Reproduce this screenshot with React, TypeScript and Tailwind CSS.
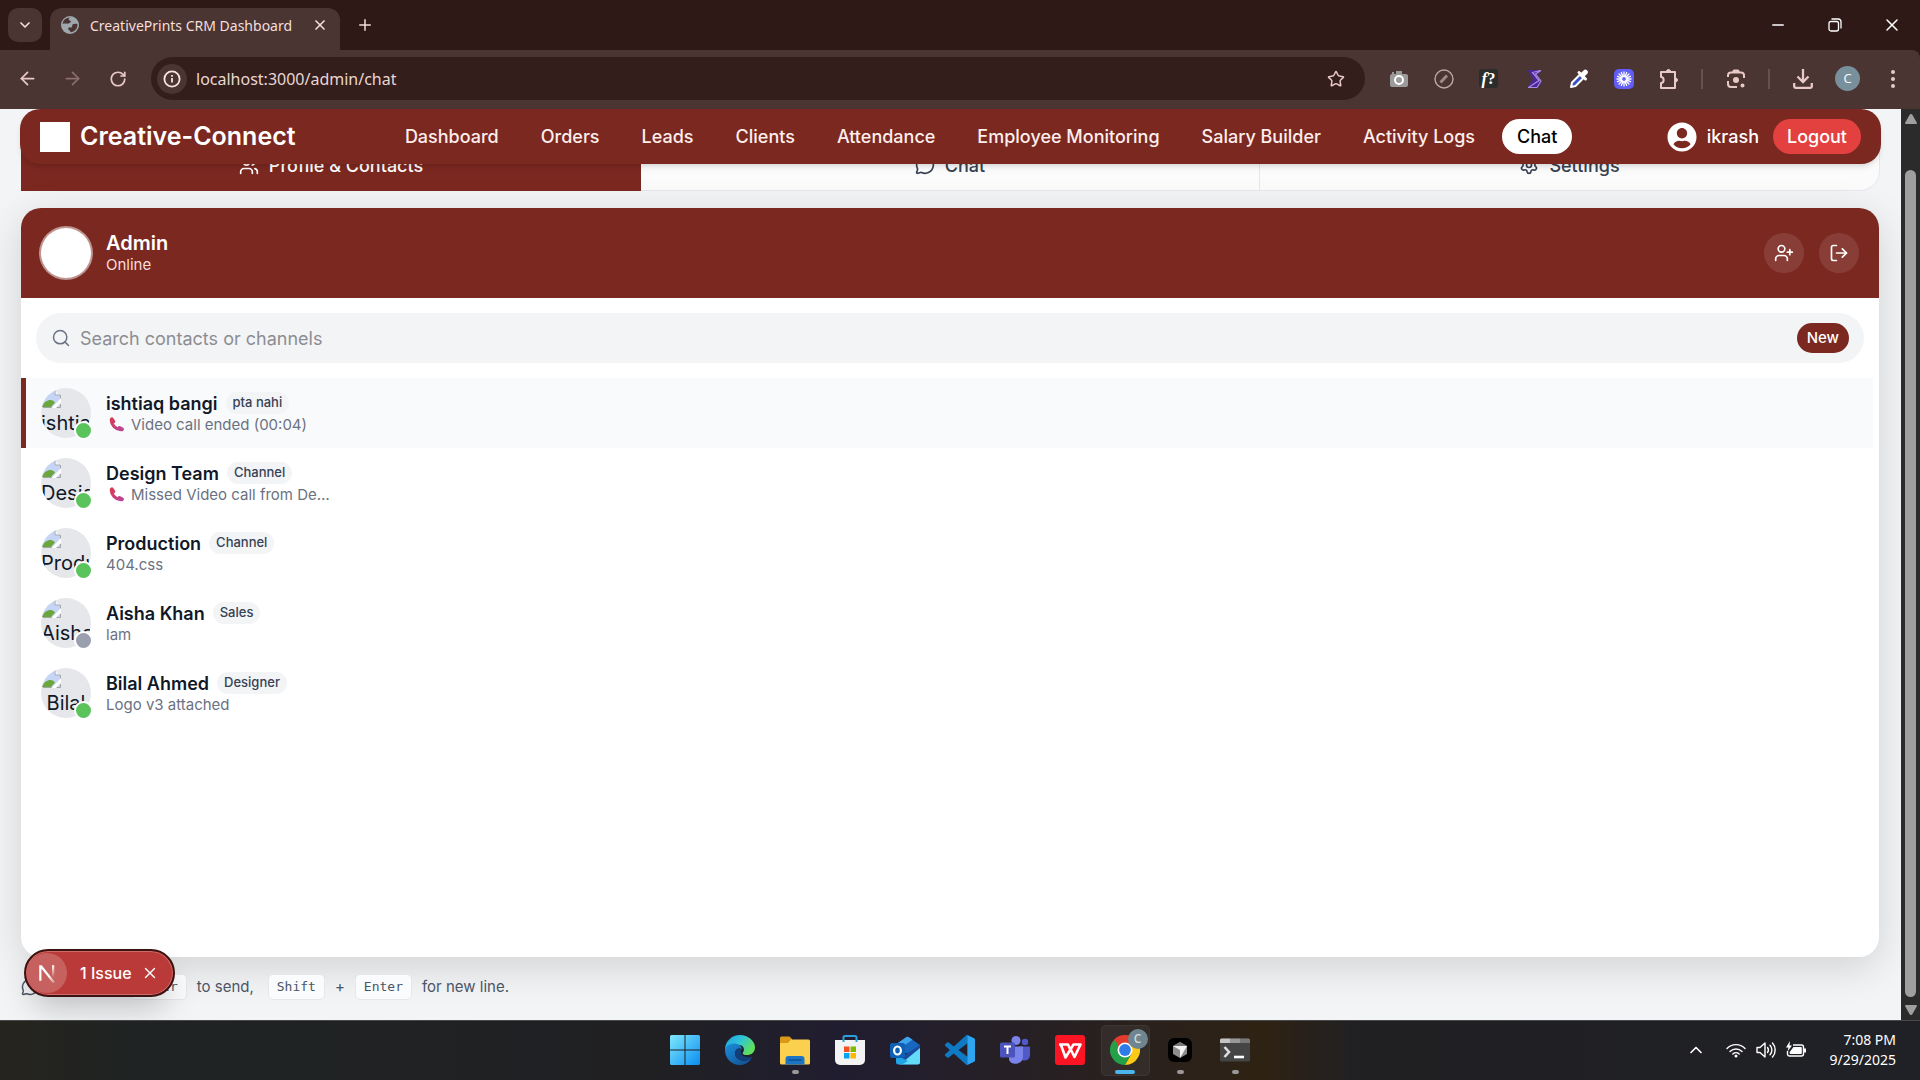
import type { ReactNode } from "react";
import {
  ArrowLeft,
  ArrowRight,
  ChevronDown,
  ChevronUp,
  LogOut,
  MessageCircle,
  Minus,
  Plus,
  RotateCw,
  Search,
  Settings,
  Star,
  UserPlus,
  Users,
  X,
} from "lucide-react";
import { FaUserCircle } from "react-icons/fa";

const navLinks = [
  "Dashboard",
  "Orders",
  "Leads",
  "Clients",
  "Attendance",
  "Employee Monitoring",
  "Salary Builder",
  "Activity Logs",
  "Chat",
];

type Contact = {
  name: string;
  tag: string;
  message: string;
  call?: boolean;
  online: boolean;
};

const contacts: Contact[] = [
  { name: "ishtiaq bangi", tag: "pta nahi", message: "Video call ended (00:04)", call: true, online: true },
  { name: "Design Team", tag: "Channel", message: "Missed Video call from De…", call: true, online: true },
  { name: "Production", tag: "Channel", message: "404.css", online: true },
  { name: "Aisha Khan", tag: "Sales", message: "lam", online: false },
  { name: "Bilal Ahmed", tag: "Designer", message: "Logo v3 attached", online: true },
];

/* ---------- Browser chrome ---------- */

function GlobeIcon() {
  return (
    <svg viewBox="0 0 18 18" className="size-[18px] shrink-0" aria-hidden="true">
      <circle cx="9" cy="9" r="9" fill="#9fa7ad" />
      <path d="M10 1.500c-2 .3-2.600 1.200-2.200 2.200.5 1 2 .8 2.200 1.800.1.900-1.200 1-1.900 1.700-.6.700-2.500.3-3.600.4C3.300 7.700 2 7.500 1.700 8.200 1.500 5 4.500 1 10 1.500zM16.400 8c-1.400-.4-3.400-.5-4.600.3-.9.600-.2 2-.9 2.700-.8.800-2.400.2-3.400.8-.8.500-.3 1.700.300 2.200.7.600 1.600.5 1.500 2.200 4 .2 7.500-3.400 7.100-8.200z" fill="#4a3533" />
    </svg>
  );
}

function TitleBar() {
  return (
    <header className="flex h-[50px] shrink-0 items-start bg-[#2e1917] text-[#f5dedb]">
      <button aria-label="Search tabs" className="mt-2 ml-2 flex size-[34px] items-center justify-center rounded-[10px] bg-[#4a3533]">
        <ChevronDown size={16} strokeWidth={2.500} />
      </button>
      <div className="mt-2 ml-2 flex h-[42px] w-[290px] items-center rounded-t-xl bg-[#4a3533] pb-2 pl-[11px]">
        <GlobeIcon />
        <span className="ml-[11px] whitespace-nowrap font-['Noto_Sans','Open_Sans',sans-serif] text-[14px]">
          CreativePrints CRM Dashboard
        </span>
        <button aria-label="Close tab" className="mr-3 ml-auto">
          <X size={16} strokeWidth={2.500} />
        </button>
      </div>
      <button aria-label="New tab" className="mt-4 ml-4">
        <Plus size={18} />
      </button>
      <div className="ml-auto flex text-white">
        <button aria-label="Minimize" className="flex h-[50px] w-[57px] items-center justify-center">
          <Minus size={18} strokeWidth={1.800} />
        </button>
        <button aria-label="Restore" className="flex h-[50px] w-[57px] items-center justify-center">
          <svg viewBox="0 0 14 14" className="size-[14px]" fill="none" stroke="currentColor" strokeWidth="1.300">
            <rect x="1" y="3.500" width="9.500" height="9.500" rx="2" />
            <path d="M3.500 1h6.500a3 3 0 0 1 3 3v6.500" />
          </svg>
        </button>
        <button aria-label="Close" className="flex h-[50px] w-[57px] items-center justify-center">
          <X size={20} strokeWidth={1.800} />
        </button>
      </div>
    </header>
  );
}

function ToolButton({ label, children }: { label: string; children: ReactNode }) {
  return (
    <button aria-label={label} className="flex h-10 w-[45px] shrink-0 items-center justify-center">
      {children}
    </button>
  );
}

function ToolDivider() {
  return (
    <div className="flex w-[22px] shrink-0 justify-center">
      <div className="h-5 w-[2px] bg-[#6b4f4c]" />
    </div>
  );
}

function Toolbar() {
  return (
    <div className="flex h-[59px] shrink-0 items-center rounded-tr-lg bg-[#4a3533] pr-[5px] pb-[2px] pl-[5px] text-[#e8c9c5]">
      <ToolButton label="Back"><ArrowLeft size={21} strokeWidth={2} /></ToolButton>
      <ToolButton label="Forward"><ArrowRight size={21} strokeWidth={2} className="text-[#8a6f6c]" /></ToolButton>
      <ToolButton label="Reload"><RotateCw size={18} strokeWidth={2.300} /></ToolButton>
      <div className="ml-[11px] flex h-[43px] min-w-0 flex-1 items-center rounded-full bg-[#331e1b] pl-[6px]">
        <button aria-label="Site information" className="flex size-[30px] shrink-0 items-center justify-center rounded-full bg-[#4a3533]">
          <svg viewBox="0 0 18 18" className="size-[18px]" fill="none" stroke="#f7e4e1" strokeWidth="1.800">
            <circle cx="9" cy="9" r="7.600" />
            <path d="M9 8v4.500M9 5v1.800" />
          </svg>
        </button>
        <input
          aria-label="Address"
          defaultValue="localhost:3000/admin/chat"
          className="ml-[9px] min-w-0 flex-1 bg-transparent font-['Noto_Sans','Open_Sans',sans-serif] text-[16px] text-[#e9d6d3] outline-none"
        />
        <button aria-label="Bookmark this page" className="mr-5">
          <Star size={18} strokeWidth={2} />
        </button>
      </div>
      <div className="ml-[11px] flex items-center">
        <ToolButton label="Screenshot">
          <svg viewBox="0 0 20 20" className="size-5">
            <path d="M3 3h2v2h2V2h6v3h4a2 2 0 0 1 2 2v9a2 2 0 0 1-2 2H3a2 2 0 0 1-2-2V7a2 2 0 0 1 2-2z" fill="#9b9b9b" />
            <circle cx="10" cy="11" r="4" fill="none" stroke="#fff" strokeWidth="2" />
          </svg>
        </ToolButton>
        <ToolButton label="Blocker">
          <svg viewBox="0 0 20 20" className="size-5">
            <circle cx="10" cy="10" r="9" fill="none" stroke="#bfa6a3" strokeWidth="1.400" />
            <path d="M6.500 13.500l6.500-7" stroke="#a08a87" strokeWidth="3" />
          </svg>
        </ToolButton>
        <ToolButton label="Font finder">
          <span className="flex size-[19px] items-center justify-center rounded-[3px] bg-[#2b2c2c] font-['Liberation_Serif',serif] text-[17px] leading-none font-bold text-white">
            <i>f</i>?
          </span>
        </ToolButton>
        <ToolButton label="Stylist">
          <svg viewBox="0 0 20 20" className="size-5" fill="none">
            <path d="M17 1H3.500l5.500 9-6 9h10.500l4-5-4.500-6z" fill="#4a2796" />
            <path d="M16 1.500L8.500 3.500l6.500 8-10.500 7M17 1.500L11.500 5l5.500 7-4 6.500H4" stroke="#a98be0" strokeWidth="1.200" />
          </svg>
        </ToolButton>
        <ToolButton label="Colour picker">
          <svg viewBox="0 0 20 20" className="size-5" fill="none">
            <path d="M2 18l1-4.500L11 5.500l3.500 3.500-8 8z" fill="#3a51c4" stroke="#fff" strokeWidth="2" strokeLinejoin="round" />
            <path d="M10 3.500l6.500 6.500M13 6.500l4-4" stroke="#fff" strokeWidth="3" strokeLinecap="round" />
            <path d="M13.500 6l2.800-2.800" stroke="#fff" strokeWidth="5" strokeLinecap="round" />
          </svg>
        </ToolButton>
        <ToolButton label="Loom">
          <svg viewBox="0 0 20 20" className="size-5">
            <rect width="20" height="20" rx="5" fill="#625df5" />
            <g stroke="#fff" strokeWidth="1.300" strokeLinecap="round">
              <path d="M10 3v14M3 10h14M5 5l10 10M15 5L5 15M7.300 3.500l5.400 13M12.700 3.500l-5.400 13M3.500 7.300l13 5.400M3.500 12.700l13-5.400" />
            </g>
            <circle cx="10" cy="10" r="2.400" fill="#625df5" stroke="#fff" strokeWidth="1" />
          </svg>
        </ToolButton>
        <ToolButton label="Extensions">
          <svg viewBox="0 0 22 22" className="size-[22px]" fill="none" stroke="currentColor" strokeWidth="2" strokeLinejoin="round">
            <path d="M3 4h14v16H3v-5c3.500 0 3.500-6 0-6z" />
            <path d="M8.500 3.500a2 2 0 0 1 4 0zM17.500 10a2 2 0 0 1 0 4z" fill="currentColor" strokeWidth="1" />
          </svg>
        </ToolButton>
        <ToolDivider />
        <ToolButton label="Search with lens">
          <svg viewBox="0 0 20 20" className="size-5" fill="none" stroke="currentColor" strokeWidth="2">
            <path d="M2 8V6.500A3 3 0 0 1 5 3.500h10a3 3 0 0 1 3 3V9M2 12v3a3 3 0 0 0 3 3h6M7 3l1-1.500h4L13 3" />
            <circle cx="10" cy="11" r="3" fill="currentColor" stroke="none" />
            <circle cx="16.500" cy="16.500" r="2" fill="currentColor" stroke="none" />
          </svg>
        </ToolButton>
        <ToolDivider />
        <ToolButton label="Downloads">
          <svg viewBox="0 0 20 20" className="size-5" fill="none" stroke="currentColor" strokeWidth="2.300">
            <path d="M10 0v12M4.500 7.500L10 13l5.500-5.500M1.200 14v3.500a1.300 1.300 0 0 0 1.300 1.300h15a1.300 1.300 0 0 0 1.300-1.300V14" />
          </svg>
        </ToolButton>
        <ToolButton label="Profile">
          <span className="flex size-[25px] items-center justify-center rounded-full bg-[#78909c] font-['Open_Sans',sans-serif] text-[13px] text-white">C</span>
        </ToolButton>
        <ToolButton label="Menu">
          <svg viewBox="0 0 4 18" className="h-[18px] w-1" fill="currentColor">
            <circle cx="2" cy="2" r="2" /><circle cx="2" cy="9" r="2" /><circle cx="2" cy="16" r="2" />
          </svg>
        </ToolButton>
      </div>
    </div>
  );
}

/* ---------- Page ---------- */

function NavBar() {
  return (
    <nav className="absolute inset-x-5 top-0 z-10 flex h-[55px] items-center justify-between rounded-[20px] bg-[#7b2820] px-5 text-[#fbeeec] shadow-md">
      <div className="flex items-center gap-[10px]">
        <div className="size-[30px] bg-white" />
        <span className="text-[25px] font-semibold whitespace-nowrap text-white">Creative-Connect</span>
      </div>
      <div className="flex gap-3">
        {navLinks.map((label) => (
          <a
            key={label}
            href="#"
            className={
              label === "Chat"
                ? "flex h-[35px] items-center rounded-full bg-white px-[15px] text-[18px] font-medium text-black"
                : "flex h-[35px] items-center px-[15px] text-[18px] font-medium whitespace-nowrap"
            }
          >
            {label}
          </a>
        ))}
      </div>
      <div className="flex items-center text-[18px] font-medium text-white">
        <FaUserCircle size={30} />
        <span className="ml-[10px]">ikrash</span>
        <button className="ml-[14px] flex h-[35px] items-center rounded-full bg-[#e24140] px-[14px]">Logout</button>
      </div>
    </nav>
  );
}

function PageTabs() {
  return (
    <div className="grid h-[52px] shrink-0 grid-cols-3 rounded-b-[20px] border border-gray-200 bg-[#fbfbfb] text-[18px] font-medium text-gray-700">
      <button className="-mb-px -ml-px flex items-center justify-center gap-[10px] bg-[#7b2820] text-white">
        <Users size={20} />
        Profile &amp; Contacts
      </button>
      <button className="flex items-center justify-center gap-[10px] border-r border-gray-200">
        <MessageCircle size={20} />
        Chat
      </button>
      <button className="flex items-center justify-center gap-[10px]">
        <Settings size={20} />
        Settings
      </button>
    </div>
  );
}

function PhoneIcon() {
  return (
    <svg viewBox="0 0 16 16" className="mr-[7px] ml-[3px] inline-block size-[15px] align-[-2px]" fill="none" strokeLinecap="round">
      <defs>
        <linearGradient id="handset" gradientUnits="userSpaceOnUse" x1="2" y1="2" x2="15" y2="14">
          <stop offset="0" stopColor="#d93a52" />
          <stop offset="1" stopColor="#b5489b" />
        </linearGradient>
      </defs>
      <g stroke="url(#handset)">
        <path d="M2.500 3.500c0 5 4.500 9.500 10 10" strokeWidth="3.400" />
        <path d="M3 2.500l1.500 2.300M11.200 11.800l2.600 1.200" strokeWidth="4.200" />
      </g>
    </svg>
  );
}

function Avatar({ name, online }: { name: string; online: boolean }) {
  return (
    <div className="relative size-[50px] shrink-0">
      <div className="size-[50px] overflow-hidden rounded-full bg-gray-200 text-center text-[20px] leading-[30px] text-gray-900">
        <svg viewBox="0 0 20 20" className="block size-5">
          <path d="M1 2h13l5 5v12H1z" fill="#c6d5f6" />
          <path d="M14 2v5h5" fill="#f4f6fa" stroke="#a9abb3" />
          <path d="M19.500 7v4M2 19.500h9M14 19.500h5.500V16" stroke="#a3a6a8" fill="none" />
          <path d="M1 19C3 14 6 12 9.500 12c2 0 3.500 1 4.500 2.500L10 19z" fill="#6aa63c" />
          <path d="M10.500 20L20 10v4.500L15 20z" fill="#fff" />
        </svg>
        {name.split(" ")[0]}
      </div>
      <span
        className={
          online
            ? "absolute -right-[2px] -bottom-[2px] size-[19px] rounded-full border-2 border-white bg-[#5ac35c]"
            : "absolute -right-[2px] -bottom-[2px] size-[19px] rounded-full border-2 border-white bg-[#9a9fae]"
        }
      />
    </div>
  );
}

function ContactRow({ contact, selected }: { contact: Contact; selected: boolean }) {
  return (
    <li>
      <button
        className={
          selected
            ? "flex h-[70px] w-full items-center gap-[15px] border-l-[5px] border-[#7b2820] bg-gray-50 pl-[15px] text-left"
            : "flex h-[70px] w-full items-center gap-[15px] border-l-[5px] border-transparent pl-[15px] text-left"
        }
      >
        <Avatar name={contact.name} online={contact.online} />
        <span className="flex flex-col pt-[2px]">
          <span className="flex h-[22px] items-center gap-2">
            <span className="text-[18px] font-semibold text-gray-900">{contact.name}</span>
            <span className="flex h-[22px] items-center rounded-full bg-gray-100 px-[7px] text-[13px] font-medium text-gray-700">
              {contact.tag}
            </span>
          </span>
          <span className="text-[15px] leading-[22px] text-gray-500">
            {contact.call && <PhoneIcon />}
            {contact.message}
          </span>
        </span>
      </button>
    </li>
  );
}

function ContactsCard() {
  return (
    <section className="mt-[17px] mr-px flex min-h-0 flex-1 flex-col overflow-hidden rounded-[20px] bg-white shadow-[0_10px_40px_rgba(0,0,0,0.14)]">
      <div className="flex h-[90px] shrink-0 items-center bg-[#7b2820] px-5 text-white">
        <div className="size-[50px] rounded-full bg-white ring-2 ring-white/50" />
        <div className="ml-[15px]">
          <h1 className="text-[20px] leading-6 font-semibold">Admin</h1>
          <p className="text-[15px] leading-5 text-[#f8dcd9]">Online</p>
        </div>
        <div className="ml-auto flex gap-[15px]">
          <button aria-label="Add contact" className="flex size-10 items-center justify-center rounded-full bg-white/10">
            <UserPlus size={20} />
          </button>
          <button aria-label="Leave" className="flex size-10 items-center justify-center rounded-full bg-white/10">
            <LogOut size={20} />
          </button>
        </div>
      </div>
      <div className="p-[15px]">
        <div className="flex h-[50px] items-center rounded-full bg-gray-100 px-[15px]">
          <Search size={20} strokeWidth={1.800} className="shrink-0 text-gray-500" />
          <input
            aria-label="Search contacts or channels"
            placeholder="Search contacts or channels"
            className="ml-[9px] min-w-0 flex-1 bg-transparent text-[18px] outline-none placeholder:text-[#8b8d92]"
          />
          <button className="flex h-[30px] items-center rounded-full bg-[#7b2820] px-[10px] text-[15px] font-medium text-white">New</button>
        </div>
      </div>
      <ul className="pr-[6px]">
        {contacts.map((contact, index) => (
          <ContactRow key={contact.name} contact={contact} selected={index === 0} />
        ))}
      </ul>
    </section>
  );
}

function Key({ children }: { children: string }) {
  return (
    <kbd className="flex h-[26px] items-center rounded-[5px] border border-gray-200 bg-[#fafbfc] px-2 font-['DejaVu_Sans_Mono',monospace] text-[13px]">
      {children}
    </kbd>
  );
}

function ShortcutHint() {
  return (
    <div className="mt-[17px] mb-5 flex h-[26px] shrink-0 items-center gap-[10px] text-[15px] whitespace-nowrap text-gray-600">
      <MessageCircle size={18} />
      <span>Tip: Press</span>
      <Key>Enter</Key>
      <span className="mr-1">to send,</span>
      <Key>Shift</Key>
      <span>+</span>
      <Key>Enter</Key>
      <span>for new line.</span>
    </div>
  );
}

function IssueBadge() {
  return (
    <div className="absolute bottom-[23px] left-6 z-20 flex h-12 items-center rounded-full border-2 border-[#3c1313] bg-[#b93a38] pr-[14px] pl-px text-white shadow-[0_16px_32px_-8px_rgba(0,0,0,0.25)] ring-1 ring-[#cf6a68] ring-inset">
      <span className="flex size-10 items-center justify-center rounded-full bg-white/20">
        <svg viewBox="0 0 18 18" className="size-5" fill="none">
          <defs>
            <linearGradient id="fade-diagonal" x1="0" y1="0" x2="1" y2="1">
              <stop offset="0.600" stopColor="#fff" />
              <stop offset="1" stopColor="#fff" stopOpacity="0.200" />
            </linearGradient>
            <linearGradient id="fade-down" x1="0" y1="0" x2="0" y2="1">
              <stop offset="0" stopColor="#fff" />
              <stop offset="1" stopColor="#fff" stopOpacity="0" />
            </linearGradient>
          </defs>
          <path d="M2 16V2h2.200l12 15.200-1.800 1L4 5v11z" fill="url(#fade-diagonal)" />
          <rect x="13.500" y="2" width="2" height="11" fill="url(#fade-down)" />
        </svg>
      </span>
      <button className="ml-[13px] text-[16px] font-medium whitespace-nowrap">1 Issue</button>
      <button aria-label="Dismiss issue" className="ml-[9px]">
        <X size={18} strokeWidth={1.800} />
      </button>
    </div>
  );
}

function ScrollBar() {
  return (
    <div className="flex w-[19px] shrink-0 flex-col items-center bg-[#2b2b2b] py-[5px]">
      <svg viewBox="0 0 12 10" className="h-[10px] w-3" fill="#9f9f9f"><path d="M6 0q1 0 1.500 1L12 9q0 1-1 1H1Q0 10 0 9l4.500-8Q5 0 6 0z" /></svg>
      <div className="mt-[46px] mb-2 w-[11px] flex-1 rounded-full bg-[#9f9f9f]" />
      <svg viewBox="0 0 12 10" className="h-[10px] w-3" fill="#9f9f9f"><path d="M6 10q1 0 1.500-1L12 1q0-1-1-1H1Q0 0 0 1l4.500 8q.5 1 1.500 1z" /></svg>
    </div>
  );
}

/* ---------- Taskbar ---------- */

const outlook = (
  <svg viewBox="0 0 30 30">
    <path d="M5 10L16.500 2q1-.7 2 0L30 10v8H5z" fill="#1767c0" />
    <path d="M5 10L16.500 2q1-.7 2 0l4 2.700L9 14z" fill="#3aa3ea" />
    <path d="M30 10v17a2.500 2.500 0 0 1-2.500 2.500H9L6 24l15-8z" fill="#1a4a9e" />
    <path d="M30 13v14a2.500 2.500 0 0 1-2.500 2.500H10z" fill="#62dcf8" />
    <path d="M6 20l12 6-6 3.500H8.500A2.500 2.500 0 0 1 6 27z" fill="#22a5e6" />
    <rect y="8" width="15" height="15" rx="2" fill="#0f5fb4" />
    <ellipse cx="7.500" cy="15.500" rx="3.400" ry="4" fill="none" stroke="#fff" strokeWidth="2.200" />
  </svg>
);

const apps: { name: string; icon: ReactNode; open?: boolean; active?: boolean }[] = [
  {
    name: "Start",
    icon: (
      <svg viewBox="0 0 30 30">
        <defs><linearGradient id="win" x1="0" y1="0" x2="1" y2="1"><stop offset="0" stopColor="#7fe9fd" /><stop offset="1" stopColor="#0a8cf0" /></linearGradient></defs>
        <path d="M1.500 0h13v14.500H0V1.500A1.500 1.500 0 0 1 1.500 0zM15.500 0h13A1.500 1.500 0 0 1 30 1.500v13H15.500zM0 15.500h14.500V30h-13A1.500 1.500 0 0 1 0 28.500zM15.500 15.500H30v13a1.500 1.500 0 0 1-1.500 1.500h-13z" fill="url(#win)" />
      </svg>
    ),
  },
  {
    name: "Edge",
    icon: (
      <svg viewBox="0 0 30 30">
        <defs>
          <linearGradient id="edge-top" x1="0" y1="0" x2="1" y2="0.500"><stop offset="0" stopColor="#1f9fe0" /><stop offset="0.500" stopColor="#2fc3dc" /><stop offset="1" stopColor="#5fe05a" /></linearGradient>
          <linearGradient id="edge-low" x1="0" y1="0" x2="1" y2="1"><stop offset="0" stopColor="#1b8fdc" /><stop offset="1" stopColor="#114a8b" /></linearGradient>
        </defs>
        <path d="M0 15C0 6 7 0 15 0s15 6 15 12.500c0 5-4 7.500-8 7.500-3.500 0-5-1.300-4-2.600 2-2.600 1-7.400-4-7.400C7 10 2 13 0 15z" fill="url(#edge-top)" />
        <path d="M0 15c1-5 6-7 10-6.500 4 .3 7 3 7 6-2-2-7-1-7 4 0 6 8 9.500 16.500 5C24 27.500 20 30 15 30 6 30 0 23 0 15z" fill="url(#edge-low)" />
        <path d="M10 18.500c0-4 3.500-6 6.500-4.500-1.500 4 0 7 5 8 2.500.4 4.500 0 6-.4-1 2.400-3.500 4-7.500 4.200-6 .2-10-3-10-7.300z" fill="#123f78" />
      </svg>
    ),
  },
  {
    name: "File Explorer",
    open: true,
    icon: (
      <svg viewBox="0 0 30 30">
        <path d="M0 3a1.500 1.500 0 0 1 1.500-1.500h8L12 4v8H0z" fill="#d99a1a" />
        <path d="M0 8h8l3-3.500h17.500A1.500 1.500 0 0 1 30 6v22a1.500 1.500 0 0 1-1.500 1.500h-27A1.500 1.500 0 0 1 0 28z" fill="#fcd04f" />
        <path d="M5.500 29.500V24a3 3 0 0 1 3-3h13a3 3 0 0 1 3 3v5.500z" fill="#1b74c4" />
        <path d="M9 25h12" stroke="#0e4f93" strokeWidth="1.500" strokeLinecap="round" />
      </svg>
    ),
  },
  {
    name: "Microsoft Store",
    icon: (
      <svg viewBox="0 0 30 30">
        <path d="M0 5h30v20a5 5 0 0 1-5 5H5a5 5 0 0 1-5-5z" fill="#f3f3f3" />
        <path d="M8.500 7V2.500A1.500 1.500 0 0 1 10 1h10a1.500 1.500 0 0 1 1.500 1.500V7" fill="none" stroke="#2a9fdc" strokeWidth="2" />
        <path d="M9 11.500h5.500V17H9z" fill="#f25022" /><path d="M15.500 11.500H21V17h-5.500z" fill="#7fba00" />
        <path d="M9 18h5.500v5.500H9z" fill="#00a4ef" /><path d="M15.500 18H21v5.500h-5.500z" fill="#ffb900" />
      </svg>
    ),
  },
  { name: "Outlook", icon: outlook },
  {
    name: "Visual Studio Code",
    icon: (
      <svg viewBox="0 0 24 24">
        <path d="M23.150 2.587L18.210.210a1.494 1.494 0 0 0-1.705.290l-9.460 8.630-4.120-3.128a.999.999 0 0 0-1.276.057L.327 7.261A1 1 0 0 0 .326 8.740L3.899 12 .326 15.260a1 1 0 0 0 .001 1.479L1.650 17.940a.999.999 0 0 0 1.276.057l4.120-3.128 9.460 8.630a1.492 1.492 0 0 0 1.704.290l4.942-2.377A1.500 1.500 0 0 0 24 20.060V3.939a1.500 1.500 0 0 0-.850-1.352zm-5.146 14.861L10.826 12l7.178-5.448v10.896z" fill="#1079c4" />
        <path d="M18 .2l5.150 2.387A1.500 1.500 0 0 1 24 3.939V20.060a1.500 1.500 0 0 1-.850 1.352L18 23.800z" fill="#2ea5ee" />
      </svg>
    ),
  },
  {
    name: "Teams",
    icon: (
      <svg viewBox="0 0 30 30">
        <circle cx="25" cy="7" r="3.200" fill="#5059c9" />
        <path d="M19 11.500h10a1 1 0 0 1 1 1V20a5.500 5.500 0 0 1-8 5z" fill="#5059c9" />
        <circle cx="16" cy="5.500" r="4.500" fill="#7b83eb" />
        <path d="M9 11.500h14V21a7.500 7.500 0 0 1-14 4z" fill="#7b83eb" />
        <rect y="7.500" width="15" height="15" rx="1.500" fill="#4b53bc" />
        <path d="M4 11.500h7M7.500 11.500V19" stroke="#fff" strokeWidth="2" />
      </svg>
    ),
  },
  {
    name: "WPS Office",
    icon: (
      <svg viewBox="0 0 30 30">
        <rect width="30" height="30" rx="3" fill="#fb1524" />
        <path d="M4 9.500h9l3 6.500M6 10l4.500 12.500L18.500 9.500h7L19.500 22l-4-8" fill="none" stroke="#fff" strokeWidth="2.600" strokeLinejoin="round" />
      </svg>
    ),
  },
  {
    name: "Chrome",
    open: true,
    active: true,
    icon: (
      <svg viewBox="0 0 30 30">
        <path d="M15 15L2 7.500a15 15 0 0 1 26 0z" fill="#e33b2e" />
        <path d="M2 7.500A15 15 0 0 0 15 30l6.500-11.200L15 15z" fill="#22a04a" />
        <path d="M28 7.500A15 15 0 0 1 15 30l6.500-11.200V7.500z" fill="#fdc918" />
        <path d="M2 7.500l6.500 11.200L15 8h13V7.500z" fill="#e33b2e" />
        <path d="M2 7.500l6.500 11.300 2-4L5 5z" fill="#22a04a" />
        <circle cx="15" cy="15" r="7.500" fill="#fff" /><circle cx="15" cy="15" r="5.900" fill="#2f7be8" />
      </svg>
    ),
  },
  {
    name: "Cursor",
    open: true,
    icon: (
      <svg viewBox="0 0 30 30">
        <rect x="3" y="3" width="24" height="24" rx="6" fill="#000" />
        <path d="M15 7l7 4v8l-7 4-7-4v-8z" fill="#8d8d8d" />
        <path d="M8 11h14l-7 12v-8z" fill="#f1f1f1" /><path d="M8 11l7-4 7 4z" fill="#777" />
      </svg>
    ),
  },
  {
    name: "Terminal",
    open: true,
    icon: (
      <svg viewBox="0 0 30 30">
        <rect y="3.500" width="30" height="23" rx="1.500" fill="#454545" />
        <path d="M0 8V5a1.500 1.500 0 0 1 1.500-1.500H10V8z" fill="#c4c4c4" /><path d="M10 3.500h10V8H10z" fill="#999" /><path d="M20 3.500h8.500A1.500 1.500 0 0 1 30 5v3H20z" fill="#777" />
        <path d="M4.500 12l4.500 5-4.500 5" fill="none" stroke="#ddd" strokeWidth="2.600" /><path d="M14 22h10" stroke="#fff" strokeWidth="2.600" />
      </svg>
    ),
  },
];

function Taskbar() {
  return (
    <footer className="grid h-[60px] shrink-0 grid-cols-[1fr_auto_1fr] items-center border-t border-[#48484b] bg-[#202023]">
      <div className="h-[59px] bg-linear-to-r from-[#26241e] via-[#1f2323] via-20% to-[#202023]" />
      <div className="flex bg-linear-to-r from-[#202023] via-[#211d30] via-30% to-[#2e2213]">
        {apps.map((app) => (
          <button key={app.name} aria-label={app.name} className="relative flex h-[59px] w-[55px] items-center justify-center pb-px">
            {app.active && <span className="absolute inset-x-[3px] inset-y-1 rounded-[5px] border border-white/5 bg-white/5" />}
            <span className="relative size-[30px] [&>svg]:size-[30px]">{app.icon}</span>
            {app.active && (
              <span className="absolute top-[8px] right-[5px] flex size-[20px] items-center justify-center rounded-full bg-[#6f8590] font-['Open_Sans',sans-serif] text-[12px] font-semibold text-[#cfd8dc]">C</span>
            )}
            {app.open && (
              <span
                className={
                  app.active
                    ? "absolute bottom-[6px] h-1 w-5 rounded-full bg-[#4cb5ea]"
                    : "absolute bottom-[6px] h-1 w-[7px] rounded-full bg-[#9b9798]"
                }
              />
            )}
          </button>
        ))}
      </div>
      <div className="flex h-[59px] items-center justify-end bg-linear-to-r from-[#2e2213] via-[#202023] via-15% to-[#202126] pr-6 pb-[2px] text-white">
        <button aria-label="Show hidden icons"><ChevronUp size={20} strokeWidth={2} /></button>
        <button aria-label="Network, volume and battery" className="ml-5 flex items-center gap-[10px]">
          <svg viewBox="0 0 20 16" className="h-4 w-5" fill="none" stroke="#fff" strokeWidth="1.400" strokeLinecap="round">
            <path d="M1 6.500a12.500 12.500 0 0 1 18 0M4 9.500a8.500 8.500 0 0 1 12 0M6.800 12a4.600 4.600 0 0 1 6.400 0" />
            <circle cx="10" cy="14" r="1.500" fill="#fff" stroke="none" />
          </svg>
          <svg viewBox="0 0 20 18" className="h-[18px] w-5" fill="none" stroke="#fff" strokeWidth="1.400" strokeLinecap="round" strokeLinejoin="round">
            <path d="M1 6.500h3L9 2v14l-5-4.500H1zM11.500 6.500a4 4 0 0 1 0 5M14 4.200a7 7 0 0 1 0 9.600M16.500 2a10.500 10.500 0 0 1 0 14" />
          </svg>
          <svg viewBox="0 0 20 17" className="h-[17px] w-5" fill="none" stroke="#fff" strokeWidth="1.400">
            <path d="M7 4h8.500a2 2 0 0 1 2 2v7a2 2 0 0 1-2 2h-12a2 2 0 0 1-2-2V10" />
            <path d="M7.500 6H15a.8.8 0 0 1 .8.800v5.400a.8.8 0 0 1-.8.800H4.500a.8.8 0 0 1-.8-.8V11zM18 7.500h2v4h-2zM4 0L0 6.500h2.500L1.500 10.500 6 4.500H3.500z" fill="#fff" stroke="none" />
          </svg>
        </button>
        <div className="ml-6 text-right font-['Noto_Sans','Open_Sans',sans-serif] text-[14px] leading-5">
          <div>7:08 PM</div>
          <div>9/29/2025</div>
        </div>
      </div>
    </footer>
  );
}

export default function App() {
  return (
    <div className="flex h-screen flex-col overflow-hidden bg-[#2e1917] font-['Inter',sans-serif]">
      <TitleBar />
      <Toolbar />
      <div className="relative flex min-h-0 flex-1 bg-[#f3f4f6]">
        <main className="relative flex min-w-0 flex-1 flex-col overflow-hidden px-[21px] pt-[30px]">
          <NavBar />
          <PageTabs />
          <ContactsCard />
          <ShortcutHint />
          <IssueBadge />
        </main>
        <ScrollBar />
      </div>
      <Taskbar />
    </div>
  );
}
